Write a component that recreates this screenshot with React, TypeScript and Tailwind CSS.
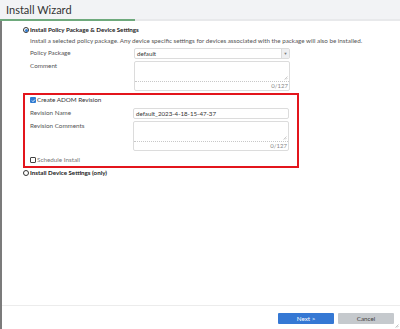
import React from 'react';

function Radio({ checked }: { checked?: boolean }) {
  return (
    <span className="flex h-[6px] w-[6px] shrink-0 items-center justify-center rounded-full border border-[#333] bg-white">
      {checked && <span className="h-[3px] w-[3px] rounded-full bg-[#2f7bd1]" />}
    </span>
  );
}

function Checkbox({ checked }: { checked?: boolean }) {
  if (checked) {
    return (
      <span className="flex h-[6px] w-[6px] shrink-0 items-center justify-center rounded-[1px] bg-[#2f7bd1]">
        <svg width="5" height="5" viewBox="0 0 10 10">
          <path d="M2 5.2l2 2L8 3" fill="none" stroke="#fff" strokeWidth="1.8" />
        </svg>
      </span>
    );
  }
  return <span className="h-[6px] w-[6px] shrink-0 rounded-[1px] border border-[#444] bg-white" />;
}

function Grip() {
  return (
    <svg width="4" height="4" viewBox="0 0 8 8" className="absolute bottom-[1px] right-[1px]">
      <path d="M7 1L1 7M7 4L4 7" stroke="#999" strokeWidth="1" />
    </svg>
  );
}

function TextBox() {
  return (
    <div className="flex h-[30px] w-[156px] flex-col rounded-[2px] border border-[#dcdcdc] bg-white">
      <div className="relative h-[20px] border-b border-dotted border-[#c8c8c8]">
        <Grip />
      </div>
      <div className="pr-[1px] text-right text-[6px] leading-[8px] text-[#888]">0/127</div>
    </div>
  );
}

function Row({ label, children, labelW = 'w-[104px]' }: { label: string; children: React.ReactNode; labelW?: string }) {
  return (
    <div className="flex items-start">
      <span className={`${labelW} shrink-0 pt-[1px] text-[6.3px] leading-[8px] text-[#555]`}>{label}</span>
      {children}
    </div>
  );
}

export default function App() {
  return (
    <div className="flex h-[329px] w-[400px] flex-col overflow-hidden bg-white font-['Lato',sans-serif] text-[#333]">
      <header className="h-[19px] shrink-0 bg-[#f2f3f5] pl-[6px] text-[11px] leading-[20px] text-[#333]">
        Install Wizard
      </header>
      <div className="flex h-[2px] shrink-0">
        <div className="w-[135px] bg-[#6ea97c]" />
        <div className="flex-1 bg-[#e8e9eb]" />
      </div>
      <div className="relative flex flex-1 flex-col border-l-[2px] border-[#7b7b7b]">
        <main className="flex-1 pl-[21px] pt-[5px]">
          <div className="flex items-center gap-[1px]">
            <Radio checked />
            <span className="text-[6.2px] font-bold leading-[8px] text-[#222]">
              Install Policy Package &amp; Device Settings
            </span>
          </div>
          <div className="pl-[7px]">
            <p className="mt-[3px] text-[6.25px] leading-[8px] text-[#555]">
              Install a selected policy package. Any device specific settings for devices associated with the package will also be installed.
            </p>
            <div className="mt-[3px] flex flex-col gap-[2px]">
              <Row label="Policy Package">
                <div className="flex h-[11px] w-[156px] items-center justify-between rounded-[2px] border border-[#dcdcdc] bg-white pl-[2px]">
                  <span className="text-[6.2px] leading-[8px] text-[#333]">default</span>
                  <span className="flex h-full w-[8px] items-center justify-center border-l border-[#dcdcdc] bg-[#eeeff1] text-[4px] text-[#777]">
                    ▼
                  </span>
                </div>
              </Row>
              <Row label="Comment">
                <TextBox />
              </Row>
            </div>
          </div>
          <section className="mt-[2px] w-[276px] border-[2px] border-[#e3151c] pb-[2px] pl-[5px] pr-[7px] pt-[1px]">
            <div className="flex items-center gap-[1px]">
              <Checkbox checked />
              <span className="text-[6.3px] leading-[8px] text-[#333]">Create ADOM Revision</span>
            </div>
            <div className="mt-[4px] flex flex-col gap-[2px]">
              <Row label="Revision Name" labelW="w-[103px]">
                <div className="flex h-[11px] w-[156px] items-center rounded-[2px] border border-[#dcdcdc] bg-white pl-[2px] text-[6.2px] leading-[8px] text-[#333]">
                  default_2023-4-18-15-47-37
                </div>
              </Row>
              <Row label="Revision Comments" labelW="w-[103px]">
                <TextBox />
              </Row>
            </div>
            <div className="mt-[5px] flex items-center gap-[1px]">
              <Checkbox />
              <span className="text-[6.3px] leading-[8px] text-[#777]">Schedule Install</span>
            </div>
          </section>
          <div className="mt-[1px] flex items-center gap-[1px]">
            <Radio />
            <span className="text-[6.2px] font-bold leading-[8px] text-[#222]">Install Device Settings (only)</span>
          </div>
        </main>
        <footer className="flex h-[24px] shrink-0 justify-end gap-[4px] border-t border-[#ececec] pr-[6px] pt-[7px]">
          <button className="h-[11px] w-[56px] rounded-[1px] bg-[#3578d4] text-[6.3px] leading-[11px] text-white">Next &gt;</button>
          <button className="h-[11px] w-[56px] rounded-[1px] bg-[#c5c9cd] text-[6.3px] leading-[11px] text-[#444]">Cancel</button>
        </footer>
        <svg width="4" height="4" viewBox="0 0 8 8" className="absolute bottom-[1px] right-[1px]">
          <path d="M7 1L1 7M7 4L4 7" stroke="#888" strokeWidth="1" />
        </svg>
      </div>
    </div>
  );
}
